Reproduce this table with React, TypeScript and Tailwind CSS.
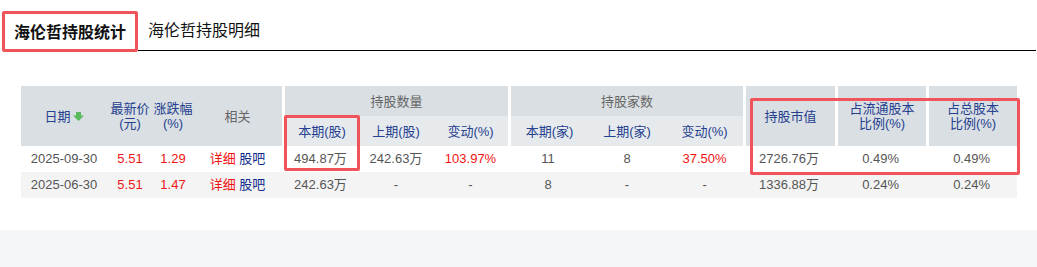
import React from 'react';

const font = { fontFamily: '"Liberation Sans", "Noto Sans CJK SC", sans-serif' };

const dark = 'bg-[#d9dfe3] font-normal text-[13px] leading-[15px] text-center align-middle';
const light = 'bg-[#e6eaed] font-normal text-[13px] leading-[15px] text-center align-middle';
const blue = 'text-[#25408f]';
const gray = 'text-[#666]';
const gap = 'border-l-[3px] border-white';

function SortArrow() {
    return (
        <svg width="11" height="9" viewBox="0 0 11 9" className="inline-block ml-[2px] -mt-[2px] align-middle">
            <rect x="3" y="0" width="5" height="4" fill="#5cb85c" />
            <path d="M0 3.5 H11 L5.5 9 Z" fill="#5cb85c" />
        </svg>
    );
}

type Row = {
    date: string;
    price: string;
    change: string;
    cur: string;
    prev: string;
    delta: string;
    curN: string;
    prevN: string;
    deltaN: string;
    value: string;
    floatPct: string;
    totalPct: string;
};

const rows: Row[] = [
    {
        date: '2025-09-30', price: '5.51', change: '1.29', cur: '494.87万', prev: '242.63万', delta: '103.97%',
        curN: '11', prevN: '8', deltaN: '37.50%', value: '2726.76万', floatPct: '0.49%', totalPct: '0.49%',
    },
    {
        date: '2025-06-30', price: '5.51', change: '1.47', cur: '242.63万', prev: '-', delta: '-',
        curN: '8', prevN: '-', deltaN: '-', value: '1336.88万', floatPct: '0.24%', totalPct: '0.24%',
    },
];

export default function App() {
    const td = 'text-[13px] text-center text-[#555] whitespace-nowrap';
    const red = 'text-[13px] text-center text-[#f01414] whitespace-nowrap';

    return (
        <div className="relative w-[1037px] h-[267px] bg-white overflow-hidden" style={font}>
            {/* tabs */}
            <div className="flex items-end pt-[13px]">
                <div className="ml-[2px] w-[136px] h-[37px] flex items-center justify-center text-[16px] font-bold text-[#111]">
                    海伦哲持股统计
                </div>
                <div className="flex-1 mr-[1px] h-[38px] border-b border-black flex items-center">
                    <span className="ml-[10px] -mt-[1px] text-[16px] text-[#111]">海伦哲持股明细</span>
                </div>
            </div>

            {/* table */}
            <div className="mt-[35px] pl-[21px]">
                <table className="table-fixed border-separate border-spacing-0 w-[996px]">
                    <colgroup>
                        <col className="w-[86px]" />
                        <col className="w-[46px]" />
                        <col className="w-[40px]" />
                        <col className="w-[89px]" />
                        <col className="w-[77px]" />
                        <col className="w-[74px]" />
                        <col className="w-[75px]" />
                        <col className="w-[80px]" />
                        <col className="w-[78px]" />
                        <col className="w-[77px]" />
                        <col className="w-[92px]" />
                        <col className="w-[91px]" />
                        <col className="w-[91px]" />
                    </colgroup>
                    <thead>
                        <tr className="h-[30px]">
                            <th rowSpan={2} className={`${dark} ${blue}`}>
                                日期<SortArrow />
                            </th>
                            <th rowSpan={2} className={`${dark} ${blue}`}>最新价<br />(元)</th>
                            <th rowSpan={2} className={`${dark} ${blue}`}>涨跌幅<br />(%)</th>
                            <th rowSpan={2} className={`${dark} ${gray}`}>相关</th>
                            <th colSpan={3} className={`${dark} ${gray} ${gap}`}>持股数量</th>
                            <th colSpan={3} className={`${dark} ${gray} ${gap}`}>持股家数</th>
                            <th rowSpan={2} className={`${dark} ${blue} ${gap}`}>持股市值</th>
                            <th rowSpan={2} className={`${dark} ${blue} ${gap}`}>占流通股本<br />比例(%)</th>
                            <th rowSpan={2} className={`${dark} ${blue} ${gap}`}>占总股本<br />比例(%)</th>
                        </tr>
                        <tr className="h-[30px]">
                            <th className={`${light} ${blue} ${gap}`}>本期(股)</th>
                            <th className={`${light} ${blue}`}>上期(股)</th>
                            <th className={`${light} ${blue}`}>变动(%)</th>
                            <th className={`${light} ${blue} ${gap}`}>本期(家)</th>
                            <th className={`${light} ${blue}`}>上期(家)</th>
                            <th className={`${light} ${blue}`}>变动(%)</th>
                        </tr>
                    </thead>
                    <tbody>
                        {rows.map((r, i) => (
                            <tr key={r.date} className={`h-[26px] ${i % 2 === 1 ? 'bg-[#f4f4f4]' : 'bg-white'}`}>
                                <td className={td}>{r.date}</td>
                                <td className={red}>{r.price}</td>
                                <td className={red}>{r.change}</td>
                                <td className="text-[13px] text-center whitespace-nowrap">
                                    <span className="text-[#f01414]">详细</span>{' '}
                                    <span className="text-[#0d2a8a]">股吧</span>
                                </td>
                                <td className={td}>{r.cur}</td>
                                <td className={td}>{r.prev}</td>
                                <td className={r.delta === '-' ? td : red}>{r.delta}</td>
                                <td className={td}>{r.curN}</td>
                                <td className={td}>{r.prevN}</td>
                                <td className={r.deltaN === '-' ? td : red}>{r.deltaN}</td>
                                <td className={td}>{r.value}</td>
                                <td className={td}>{r.floatPct}</td>
                                <td className={td}>{r.totalPct}</td>
                            </tr>
                        ))}
                    </tbody>
                </table>
            </div>

            {/* bottom band */}
            <div className="absolute left-0 right-0 bottom-0 h-[37px] bg-[#f5f6f7]" />

            {/* annotation boxes */}
            <div className="absolute left-[2px] top-[11px] w-[136px] h-[41px] border-[3px] border-[#f0545a] rounded-[2px] pointer-events-none" />
            <div className="absolute left-[284px] top-[115px] w-[76px] h-[56px] border-[3px] border-[#f0545a] rounded-[2px] pointer-events-none" />
            <div className="absolute left-[750px] top-[98px] w-[270px] h-[77px] border-[3px] border-[#f0545a] rounded-[2px] pointer-events-none" />
        </div>
    );
}
